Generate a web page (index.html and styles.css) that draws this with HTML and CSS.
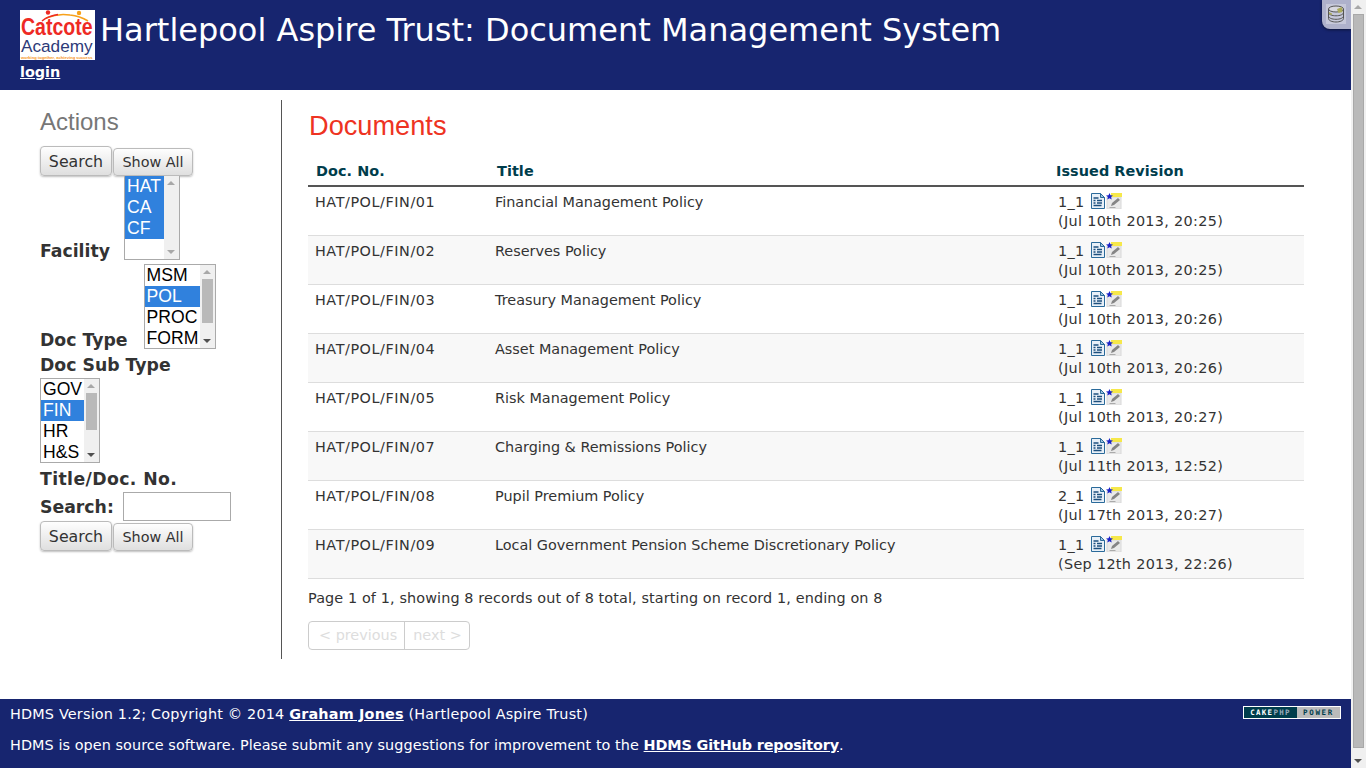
FILE: index.html
```html
<!DOCTYPE html>
<html lang="en">
<head>
  <meta charset="UTF-8" />
  <title>HDMS - Documents</title>
  <link rel="stylesheet" href="styles.css">
</head>
<body>
  <div class="page">
    <!-- Header -->
    <div class="header">
      <div class="brand">
        <svg class="logo" width="75" height="50" viewBox="0 0 75 50">
          <rect width="75" height="50" fill="#fff"/>
          <path d="M26 8 Q38 3 50 5 Q60 6 68 11" fill="none" stroke="#f7a11a" stroke-width="1.6"/>
          <path d="M22 11 Q28 6 38 4.500" fill="none" stroke="#ee2a24" stroke-width="1.6"/>
          <circle cx="28" cy="2.500" r="2.200" fill="#ee2a24"/>
          <circle cx="59" cy="3" r="2.200" fill="#f7a11a"/>
          <text class="logo-red" transform="scale(1 1.25)" x="1" y="20">Catcote</text>
          <text class="logo-blue" x="1" y="42">Academy</text>
          <text class="logo-tag" x="1" y="49">working together, achieving success</text>
        </svg>
        <h1>Hartlepool Aspire Trust: Document Management System</h1>
      </div>
      <a class="login" href="#">login</a>
      <div class="debug-tab">
        <svg width="20" height="20" viewBox="0 0 20 20">
          <rect width="20" height="20" fill="#c6c8da"/>
          <ellipse cx="10" cy="5" rx="7.500" ry="3" fill="#d8d8e0" stroke="#555" stroke-width="1"/>
          <path d="M2.500 5v9.500c0 2 3.500 3.500 7.500 3.500s7.500-1.500 7.500-3.500V5" fill="none" stroke="#555" stroke-width="1"/>
          <path d="M2.500 8.500c0 2 3.500 3.300 7.500 3.300s7.500-1.300 7.500-3.300M2.500 12c0 2 3.500 3.300 7.500 3.300s7.500-1.300 7.500-3.300" fill="none" stroke="#555" stroke-width="1"/>
          <path d="M11 5l5-2 .5 5-4 1zM3 8l3 1.500V11l-3-1z" fill="#a9a95a"/>
        </svg>
      </div>
    </div>

    <div class="content">
      <!-- Actions -->
      <div class="actions">
        <h3>Actions</h3>
        <div class="btn-row">
          <button class="btn btn-search">Search</button><button class="btn btn-all">Show All</button>
        </div>
        <div class="field-row">
          <label>Facility</label>
          <div class="listbox lb-facility">
            <div class="options">
              <div class="opt sel">HAT</div>
              <div class="opt sel">CA</div>
              <div class="opt sel">CF</div>
            </div>
            <div class="lb-bar"><span class="up off"></span><span class="down off"></span></div>
          </div>
        </div>
        <div class="field-row row-type">
          <label>Doc Type</label>
          <div class="listbox lb-type">
            <div class="options">
              <div class="opt">MSM</div>
              <div class="opt sel">POL</div>
              <div class="opt">PROC</div>
              <div class="opt">FORM</div>
            </div>
            <div class="lb-bar"><span class="up off"></span><span class="thumb"></span><span class="down"></span></div>
          </div>
        </div>
        <label class="block-label">Doc Sub Type</label>
        <div class="listbox lb-sub">
          <div class="options">
            <div class="opt">GOV</div>
            <div class="opt sel">FIN</div>
            <div class="opt">HR</div>
            <div class="opt">H&amp;S</div>
          </div>
          <div class="lb-bar"><span class="up off"></span><span class="thumb"></span><span class="down"></span></div>
        </div>
        <label class="block-label label-title">Title/Doc. No.</label>
        <div class="search-row">
          <label>Search:</label>
          <input type="text">
        </div>
        <div class="btn-row">
          <button class="btn btn-search">Search</button><button class="btn btn-all">Show All</button>
        </div>
      </div>

      <!-- Documents -->
      <div class="documents">
        <h2>Documents</h2>
        <table>
          <colgroup>
            <col class="col-no"><col class="col-title"><col class="col-rev">
          </colgroup>
          <thead>
            <tr><th>Doc. No.</th><th>Title</th><th>Issued Revision</th></tr>
          </thead>
          <tbody>
            <tr>
              <td class="doc-no">HAT/POL/FIN/01</td><td>Financial Management Policy</td>
              <td class="rev">1_1 <svg class="ic"><use href="#doc-ic"/></svg><svg class="ic"><use href="#edit-ic"/></svg><br>(Jul 10th 2013, 20:25)</td>
            </tr>
            <tr class="alt">
              <td class="doc-no">HAT/POL/FIN/02</td><td>Reserves Policy</td>
              <td class="rev">1_1 <svg class="ic"><use href="#doc-ic"/></svg><svg class="ic"><use href="#edit-ic"/></svg><br>(Jul 10th 2013, 20:25)</td>
            </tr>
            <tr>
              <td class="doc-no">HAT/POL/FIN/03</td><td>Treasury Management Policy</td>
              <td class="rev">1_1 <svg class="ic"><use href="#doc-ic"/></svg><svg class="ic"><use href="#edit-ic"/></svg><br>(Jul 10th 2013, 20:26)</td>
            </tr>
            <tr class="alt">
              <td class="doc-no">HAT/POL/FIN/04</td><td>Asset Management Policy</td>
              <td class="rev">1_1 <svg class="ic"><use href="#doc-ic"/></svg><svg class="ic"><use href="#edit-ic"/></svg><br>(Jul 10th 2013, 20:26)</td>
            </tr>
            <tr>
              <td class="doc-no">HAT/POL/FIN/05</td><td>Risk Management Policy</td>
              <td class="rev">1_1 <svg class="ic"><use href="#doc-ic"/></svg><svg class="ic"><use href="#edit-ic"/></svg><br>(Jul 10th 2013, 20:27)</td>
            </tr>
            <tr class="alt">
              <td class="doc-no">HAT/POL/FIN/07</td><td>Charging &amp; Remissions Policy</td>
              <td class="rev">1_1 <svg class="ic"><use href="#doc-ic"/></svg><svg class="ic"><use href="#edit-ic"/></svg><br>(Jul 11th 2013, 12:52)</td>
            </tr>
            <tr>
              <td class="doc-no">HAT/POL/FIN/08</td><td>Pupil Premium Policy</td>
              <td class="rev">2_1 <svg class="ic"><use href="#doc-ic"/></svg><svg class="ic"><use href="#edit-ic"/></svg><br>(Jul 17th 2013, 20:27)</td>
            </tr>
            <tr class="alt">
              <td class="doc-no">HAT/POL/FIN/09</td><td>Local Government Pension Scheme Discretionary Policy</td>
              <td class="rev">1_1 <svg class="ic"><use href="#doc-ic"/></svg><svg class="ic"><use href="#edit-ic"/></svg><br>(Sep 12th 2013, 22:26)</td>
            </tr>
          </tbody>
        </table>
        <p class="counter">Page 1 of 1, showing 8 records out of 8 total, starting on record 1, ending on 8</p>
        <div class="paging"><span>&lt; previous</span><span>next &gt;</span></div>
      </div>
    </div>

    <!-- Footer -->
    <div class="footer">
      <div class="foot-line">
        <span>HDMS Version 1.2; Copyright © 2014 <a href="#">Graham Jones</a> (Hartlepool Aspire Trust)</span>
        <span class="cake-badge"><b>CAKE<i>PHP</i></b><em>POWER</em></span>
      </div>
      <p>HDMS is open source software. Please submit any suggestions for improvement to the <a href="#">HDMS GitHub repository</a>.</p>
    </div>
  </div>

  <!-- Page scrollbar -->
  <div class="scrollbar"><span class="up off"></span><span class="thumb"></span><span class="down"></span></div>

  <!-- Table icons -->
  <svg class="defs" width="0" height="0">
    <symbol id="doc-ic" viewBox="0 0 16 16">
      <path d="M1.500 .5h9l4 4v11h-13z" fill="#e8f0f8" stroke="#2a6a9a"/>
      <path d="M10.500 .5v4h4z" fill="#9cc4e0" stroke="#2a6a9a"/>
      <path d="M3.500 5h5M3.500 7.500h2M7 7.500h5M3.500 10h2M7 10h5M3.500 12.500h8" stroke="#1d4f7d" stroke-width="1.300"/>
    </symbol>
    <symbol id="edit-ic" viewBox="0 0 16 16">
      <rect x="1" y="4" width="14" height="12" fill="#e9e9e9" stroke="#d8d8d8"/>
      <rect x="5" y="0" width="11" height="4" fill="#f6e84a"/>
      <path d="M3.500 0l1 2.300 2.500.2-1.900 1.600.6 2.400-2.200-1.300-2.200 1.300.6-2.400L0 2.500l2.500-.2z" fill="#1a22c8"/>
      <path d="M5 13l1-3 6-5 2 2-6 5z" fill="#858585"/>
      <path d="M3.500 14.500h6" stroke="#aaa"/>
    </symbol>
  </svg>
</body>
</html>
```

FILE: styles.css
```css
html, body {
  height: 100%;
  margin: 0;
  padding: 0;
  overflow: hidden;
}

body {
  display: flex;
  font-family: "DejaVu Sans", sans-serif;
  font-size: 14.4px;
  color: #333;
  background-color: #fff;
}

.page {
  flex: 1;
  min-width: 0;
  display: flex;
  flex-direction: column;
}

/* Header */
.header {
  position: relative;
  height: 90px;
  box-sizing: border-box;
  padding: 10px 0 0 20px;
  background-color: #17256f;
  color: #fff;
}

.brand {
  display: flex;
  height: 50px;
  gap: 5px;
}

.logo {
  flex: none;
}

.logo-red {
  font: bold 19.500px "Liberation Sans", sans-serif;
  fill: #ee2a24;
}

.logo-blue {
  font: 17.200px "Liberation Sans", sans-serif;
  fill: #2d3a78;
}

.logo-tag {
  font: bold 4.100px "Liberation Sans", sans-serif;
  fill: #f7941d;
}

.header h1 {
  margin: 0;
  font-size: 32px;
  font-weight: normal;
  line-height: 40px;
}

.login {
  display: block;
  margin-top: 2px;
  font-size: 14.400px;
  font-weight: bold;
  line-height: 20px;
  color: #fff;
}

.debug-tab {
  position: absolute;
  top: 0;
  right: 0;
  width: 29px;
  height: 29px;
  box-sizing: border-box;
  padding: 4px 0 0 4px;
  background-color: #aeb1cb;
  border-bottom-left-radius: 8px;
  box-shadow: 0 1px 3px rgba(0, 0, 0, 0.5);
}

.debug-tab svg {
  display: block;
}

/* Main area */
.content {
  flex: 1;
  display: flex;
  padding: 10px 0 40px 40px;
}

.actions {
  width: 242px;
  height: 559px;
  flex: none;
  box-sizing: border-box;
  border-right: 1px solid #555;
}

.actions h3 {
  margin: 0 0 2px;
  font: normal 24px/44px "Liberation Sans", sans-serif;
  color: #777;
}

.btn-row {
  display: flex;
  align-items: flex-end;
  gap: 1px;
}

.btn {
  padding: 0;
  border: 1px solid #bbb;
  border-radius: 4px;
  background: linear-gradient(#fefefe, #dfdfdf);
  box-shadow: 0 1px 2px rgba(0, 0, 0, 0.25);
  font-family: "DejaVu Sans", sans-serif;
  color: #333;
}

.btn-search {
  width: 72px;
  height: 30px;
  font-size: 15.800px;
}

.btn-all {
  width: 80px;
  height: 28px;
  font-size: 14.400px;
}

.field-row {
  display: flex;
  align-items: flex-end;
}

.field-row label,
.search-row label {
  font-size: 17.300px;
  font-weight: bold;
  line-height: 18px;
}

.block-label {
  display: block;
  margin-top: 5px;
  font-size: 17.300px;
  font-weight: bold;
  line-height: 22px;
}

.row-type {
  margin-top: 4px;
}

.listbox {
  display: flex;
  box-sizing: border-box;
  height: 85px;
  border: 1px solid #aaa;
  background-color: #fff;
  font-family: "Liberation Sans", sans-serif;
  font-size: 17.600px;
  color: #000;
}

.options {
  flex: 1;
}

.opt {
  height: 21px;
  padding-left: 2px;
  line-height: 21px;
}

.opt.sel {
  background-color: #3081dd;
  color: #fff;
}

.lb-facility {
  width: 56px;
  height: 84px;
  margin-left: 14px;
  border-top: 0;
}

.lb-type {
  width: 72px;
  margin-left: 16px;
}

.lb-sub {
  width: 60px;
  margin-top: 2px;
}

.lb-bar,
.scrollbar {
  position: relative;
  flex: none;
  width: 15px;
  background-color: #f0f0f0;
}

.lb-bar .thumb {
  position: absolute;
  top: 14px;
  left: 2px;
  width: 11px;
  height: 44px;
  background-color: #b9b9b9;
}

.lb-sub .lb-bar .thumb {
  height: 37px;
}

.up, .down {
  position: absolute;
  left: 3px;
  width: 0;
  height: 0;
  border-left: 4px solid transparent;
  border-right: 4px solid transparent;
}

.up {
  top: 5px;
  border-bottom: 4px solid #505050;
}

.down {
  bottom: 5px;
  border-top: 4px solid #505050;
}

.up.off {
  border-bottom-color: #a8a8a8;
}

.down.off {
  border-top-color: #a8a8a8;
}

.label-title {
  letter-spacing: 0.380px;
}

.search-row {
  display: flex;
  align-items: center;
  gap: 9px;
  margin-top: 2px;
  height: 29px;
}

.search-row input {
  width: 108px;
  height: 29px;
  box-sizing: border-box;
  border: 1px solid #aaa;
  padding: 2px;
}

/* Documents */
.documents {
  flex: 1;
  min-width: 0;
  padding: 0 47px 0 26px;
}

.documents h2 {
  margin: 0 0 8px 1px;
  font: normal 27.200px/52px "Liberation Sans", sans-serif;
  color: #e32;
}

table {
  width: 100%;
  table-layout: fixed;
  border-collapse: collapse;
}

.col-no {
  width: 180px;
}

.col-rev {
  width: 256px;
}

th {
  padding: 2px 0 4px 8px;
  border-bottom: 2px solid #555;
  text-align: left;
  line-height: 19px;
  letter-spacing: 0.080px;
  color: #003d4c;
}

th:nth-child(2) {
  padding-left: 9px;
}

td {
  height: 49px;
  box-sizing: border-box;
  padding: 6px 7px 0;
  border-bottom: 1px solid #ddd;
  vertical-align: top;
  line-height: 19px;
}

.alt td {
  background-color: #f8f8f8;
}

td.doc-no {
  letter-spacing: 0.550px;
}

td.rev {
  padding-left: 10px;
  letter-spacing: 0.320px;
}

.ic {
  width: 16px;
  height: 16px;
  vertical-align: -2px;
}

.rev .ic:first-of-type {
  margin-left: 1px;
}

.counter {
  margin: 10px 0 13px;
  line-height: 19px;
  letter-spacing: 0.115px;
}

.paging {
  display: inline-flex;
  height: 29px;
  box-sizing: border-box;
  border: 1px solid #ccc;
  border-radius: 4px;
  color: #ddd;
  line-height: 27px;
}

.paging span {
  padding: 0 7px 0 10px;
}

.paging span + span {
  border-left: 1px solid #ccc;
  padding: 0 7px 0 8px;
}

/* Footer */
.footer {
  height: 69px;
  flex: none;
  box-sizing: border-box;
  padding: 5px 10px 0;
  background-color: #17256f;
  color: #fff;
  line-height: 20px;
}

.footer a {
  font-weight: bold;
  color: #fff;
}

.footer p {
  margin: 11px 0 0;
  letter-spacing: 0.070px;
}

.footer p a {
  letter-spacing: -0.150px;
}

.foot-line {
  display: flex;
  justify-content: space-between;
  letter-spacing: 0.180px;
}

.cake-badge {
  display: flex;
  width: 98px;
  height: 13px;
  margin-top: 2px;
  box-sizing: border-box;
  border: 1px solid #fff;
  font: 7.500px/11px "DejaVu Sans Mono", monospace;
  letter-spacing: 1.300px;
  text-align: center;
}

.cake-badge b {
  flex: 1;
  background-color: #003d4c;
  font-weight: bold;
}

.cake-badge i {
  font-style: normal;
  color: #9ab;
}

.cake-badge em {
  width: 43px;
  background-color: #bbb;
  color: #003d4c;
  font-style: normal;
  font-weight: bold;
  letter-spacing: 1.700px;
}

/* Page scrollbar */
.scrollbar .thumb {
  position: absolute;
  top: 14px;
  bottom: 20px;
  left: 2px;
  width: 11px;
  border: 1px solid #a8a8a8;
  box-sizing: border-box;
  background-color: #b9b9b9;
}

.defs {
  position: absolute;
}
```
